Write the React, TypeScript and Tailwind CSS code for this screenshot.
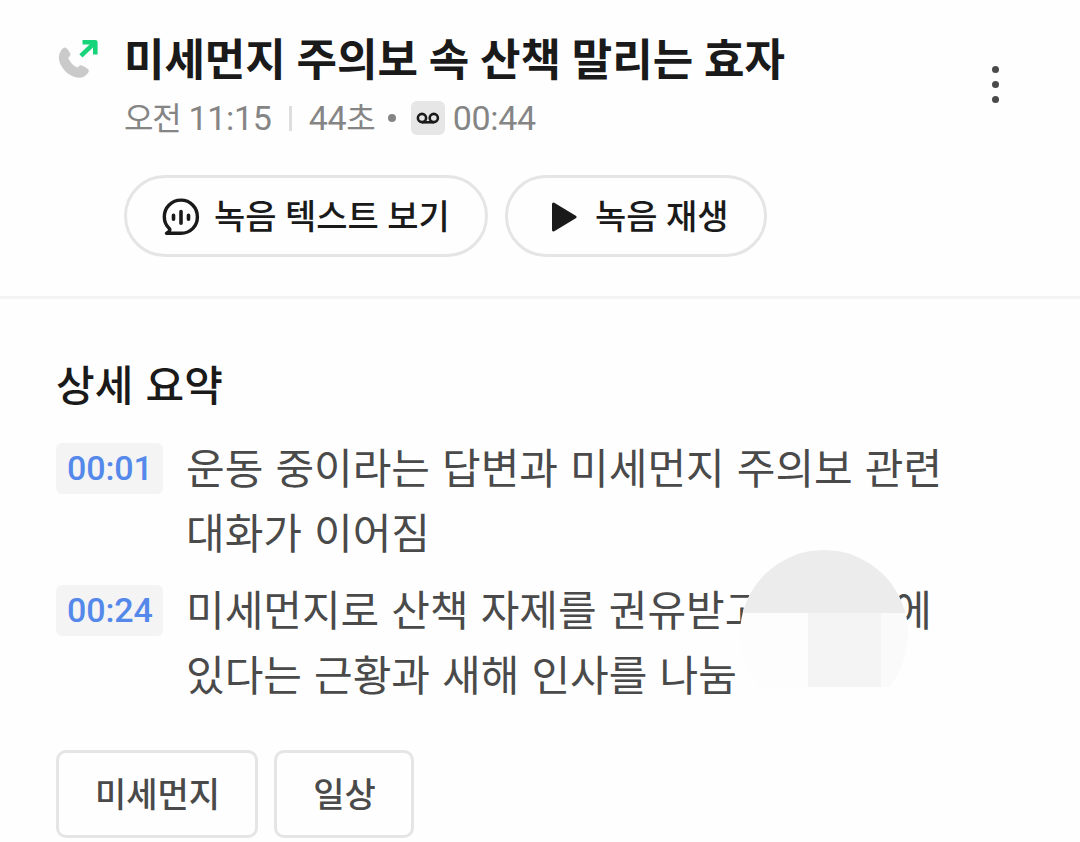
import { ReactNode } from "react";

const summary = [
  {
    time: "00:01",
    lines: ["운동 중이라는 답변과 미세먼지 주의보 관련", "대화가 이어짐"],
  },
  {
    time: "00:24",
    lines: [
      <>
        미세먼지로 산책 자제를 권유받고
        <span className="inline-block w-[130px]" />에
      </>,
      "있다는 근황과 새해 인사를 나눔",
    ],
  },
];

const tags = ["미세먼지", "일상"];

function CallIcon() {
  return (
    <svg width="42" height="42" viewBox="0 0 42 42" fill="none">
      <path
        d="M3.2 9.8C4.4 8 5.600 6.900 6.900 6.900C8.500 6.900 10.300 9.400 11.900 12.200C12.900 14.200 12.500 15.300 10.900 16.600C10.300 17.100 10.300 17.600 10.700 18.500C12.300 21.800 14.600 24.500 18.200 26.600C19.100 27.100 19.700 27 20.300 26.300C21.500 24.800 22.600 24.400 24.400 25.200C26.500 26.200 29.200 27.700 30.300 29.100C31.200 30.200 30.900 31.400 29.800 32.700C27.700 35.300 24.300 37.900 19.800 37.200C9.600 35.500 1.600 26.300.900 18.200C.5 15.300 1.600 12.300 3.200 9.800Z"
        transform="translate(0 2.500)"
        fill="#cacaca"
      />
      <path d="M24.500 4.200H37.300V16.600M36.800 4.700L22.900 17.800" stroke="#17d47b" strokeWidth="4.6" strokeLinecap="butt" strokeLinejoin="round" />
    </svg>
  );
}

function VoicemailIcon() {
  return (
    <span className="flex h-[34px] w-[34px] items-center justify-center rounded-md bg-[#e6e6e6]">
      <svg width="24" height="13" viewBox="0 0 24 13" fill="none" stroke="#1a1a1a" strokeWidth="2.6">
        <circle cx="6" cy="6" r="4.100" />
        <circle cx="17.800" cy="6" r="4.100" />
        <path d="M6 10.300H17.800" />
      </svg>
    </span>
  );
}

function TextIcon() {
  return (
    <svg width="38" height="38" viewBox="0 0 38 38" fill="none" stroke="#1a1a1a" strokeLinecap="round" strokeLinejoin="round">
      <path
        d="M19 35.300C28.200 35.300 35.400 28.300 35.400 19C35.400 9.500 28.200 2.100 19 2.100C9.600 2.100 2.300 9.500 2.300 18.800C2.300 23.800 4.300 27.900 7.700 31C8.200 32.700 6.900 34.200 4.500 35.300Z"
        strokeWidth="3.4"
      />
      <path d="M11.500 17.200V21.300M19 13.500V25.300M26.500 17.200V21.300" strokeWidth="3.6" />
    </svg>
  );
}

function PlayIcon() {
  return (
    <svg width="26" height="32" viewBox="0 0 26 32">
      <path d="M2.500 3L24 16L2.500 29Z" fill="#1a1a1a" stroke="#1a1a1a" strokeWidth="3" strokeLinejoin="round" />
    </svg>
  );
}

function PillButton({ className, children }: { className: string; children: ReactNode }) {
  return (
    <button
      className={`flex h-[82px] items-center rounded-full border-3 border-[#e5e5e5] pt-[2px] text-[34px] font-medium text-[#1a1a1a] ${className}`}
    >
      {children}
    </button>
  );
}

export default function App() {
  return (
    <main className="relative h-[842px] w-[1080px] overflow-hidden bg-[#fefefe] font-['Roboto','Noto_Sans_CJK_KR',sans-serif] whitespace-nowrap">
      {/* Call header */}
      <header className="flex h-[299px] items-start border-b-3 border-[#f4f4f4] pt-[35px] pl-[58px]">
        <div className="w-[66px] pt-[3px]">
          <CallIcon />
        </div>
        <div className="w-[860px]">
          <h1 className="h-[52px] text-[44px] leading-[52px] font-bold tracking-[-0.05px] text-[#1a1a1a]">
            미세먼지 주의보 속 산책 말리는 효자
          </h1>
          <div className="mt-[11px] flex h-10 items-center text-[34px] tracking-[-0.3px] text-[#858585]">
            <span className="flex items-baseline">
              <span className="text-[32px] tracking-[-1.2px]">오전</span>
              <span className="ml-[8px]">11:15</span>
            </span>
            <span className="ml-[17px] h-[25px] w-[3px] bg-[#dddddd]" />
            <span className="ml-[17px] flex items-baseline">
              44<span className="text-[32px] tracking-[-1px]">초</span>
            </span>
            <span className="mr-[15px] ml-[13px] h-[8px] w-[8px] rounded-full bg-[#858585]" />
            <VoicemailIcon />
            <span className="ml-[8px]">00:44</span>
          </div>
          <div className="mt-[37px] flex gap-[17px]">
            <PillButton className="w-[364px] gap-[14px] pl-[35px]">
              <TextIcon />
              <span>녹음 텍스트 보기</span>
            </PillButton>
            <PillButton className="w-[262px] gap-[18px] pl-[43px]">
              <PlayIcon />
              <span>녹음 재생</span>
            </PillButton>
          </div>
        </div>
        <button className="mt-[31px] ml-[8px] flex flex-col gap-[8px]">
          <span className="h-[7px] w-[7px] rounded-full bg-[#4a4a4a]" />
          <span className="h-[7px] w-[7px] rounded-full bg-[#4a4a4a]" />
          <span className="h-[7px] w-[7px] rounded-full bg-[#4a4a4a]" />
        </button>
      </header>

      {/* Detailed summary */}
      <section className="pt-[60px] pl-[56px]">
        <h2 className="h-[56px] text-[42px] leading-[56px] font-medium text-[#1a1a1a] [word-spacing:1.9px]">상세 요약</h2>
        <ul className="mt-[22px] space-y-[12px]">
          {summary.map((item) => (
            <li key={item.time} className="flex h-[130px] items-start">
              <span className="mt-[6px] flex h-[51px] w-[107px] items-center rounded-md bg-[#f4f4f4] pl-[11px] text-[34px] font-medium tracking-[-0.1px] text-[#5488ea]">
                {item.time}
              </span>
              <div className="ml-[23px] text-[42px] text-[#4a4a4a] [word-spacing:1.7px]">
                {item.lines.map((line, i) => (
                  <p key={i} className="h-[65px] leading-[65px]">
                    {line}
                  </p>
                ))}
              </div>
            </li>
          ))}
        </ul>

        {/* Tags */}
        <div className="mt-[41px] flex gap-[16px]">
          {tags.map((tag) => (
            <span
              key={tag}
              className="flex h-[88px] items-center rounded-[10px] border-3 border-[#e5e5e5] pt-[2px] pr-[35px] pl-[36px] text-[34px] font-medium text-[#4a4a4a]"
            >
              {tag}
            </span>
          ))}
        </div>
      </section>

      {/* Round mask over the hidden word */}
      <div className="absolute top-[550px] left-[740px] h-[137px] w-[168px] overflow-hidden">
        <div className="h-[168px] overflow-hidden rounded-full bg-[#fdfdfd]">
          <div className="h-[63px] bg-[#ececec]" />
          <div className="flex h-[105px]">
            <div className="w-[68px]" />
            <div className="w-[73px] bg-[#f4f4f4]" />
            <div className="w-[27px] bg-[#fafafa]" />
          </div>
        </div>
      </div>
    </main>
  );
}
